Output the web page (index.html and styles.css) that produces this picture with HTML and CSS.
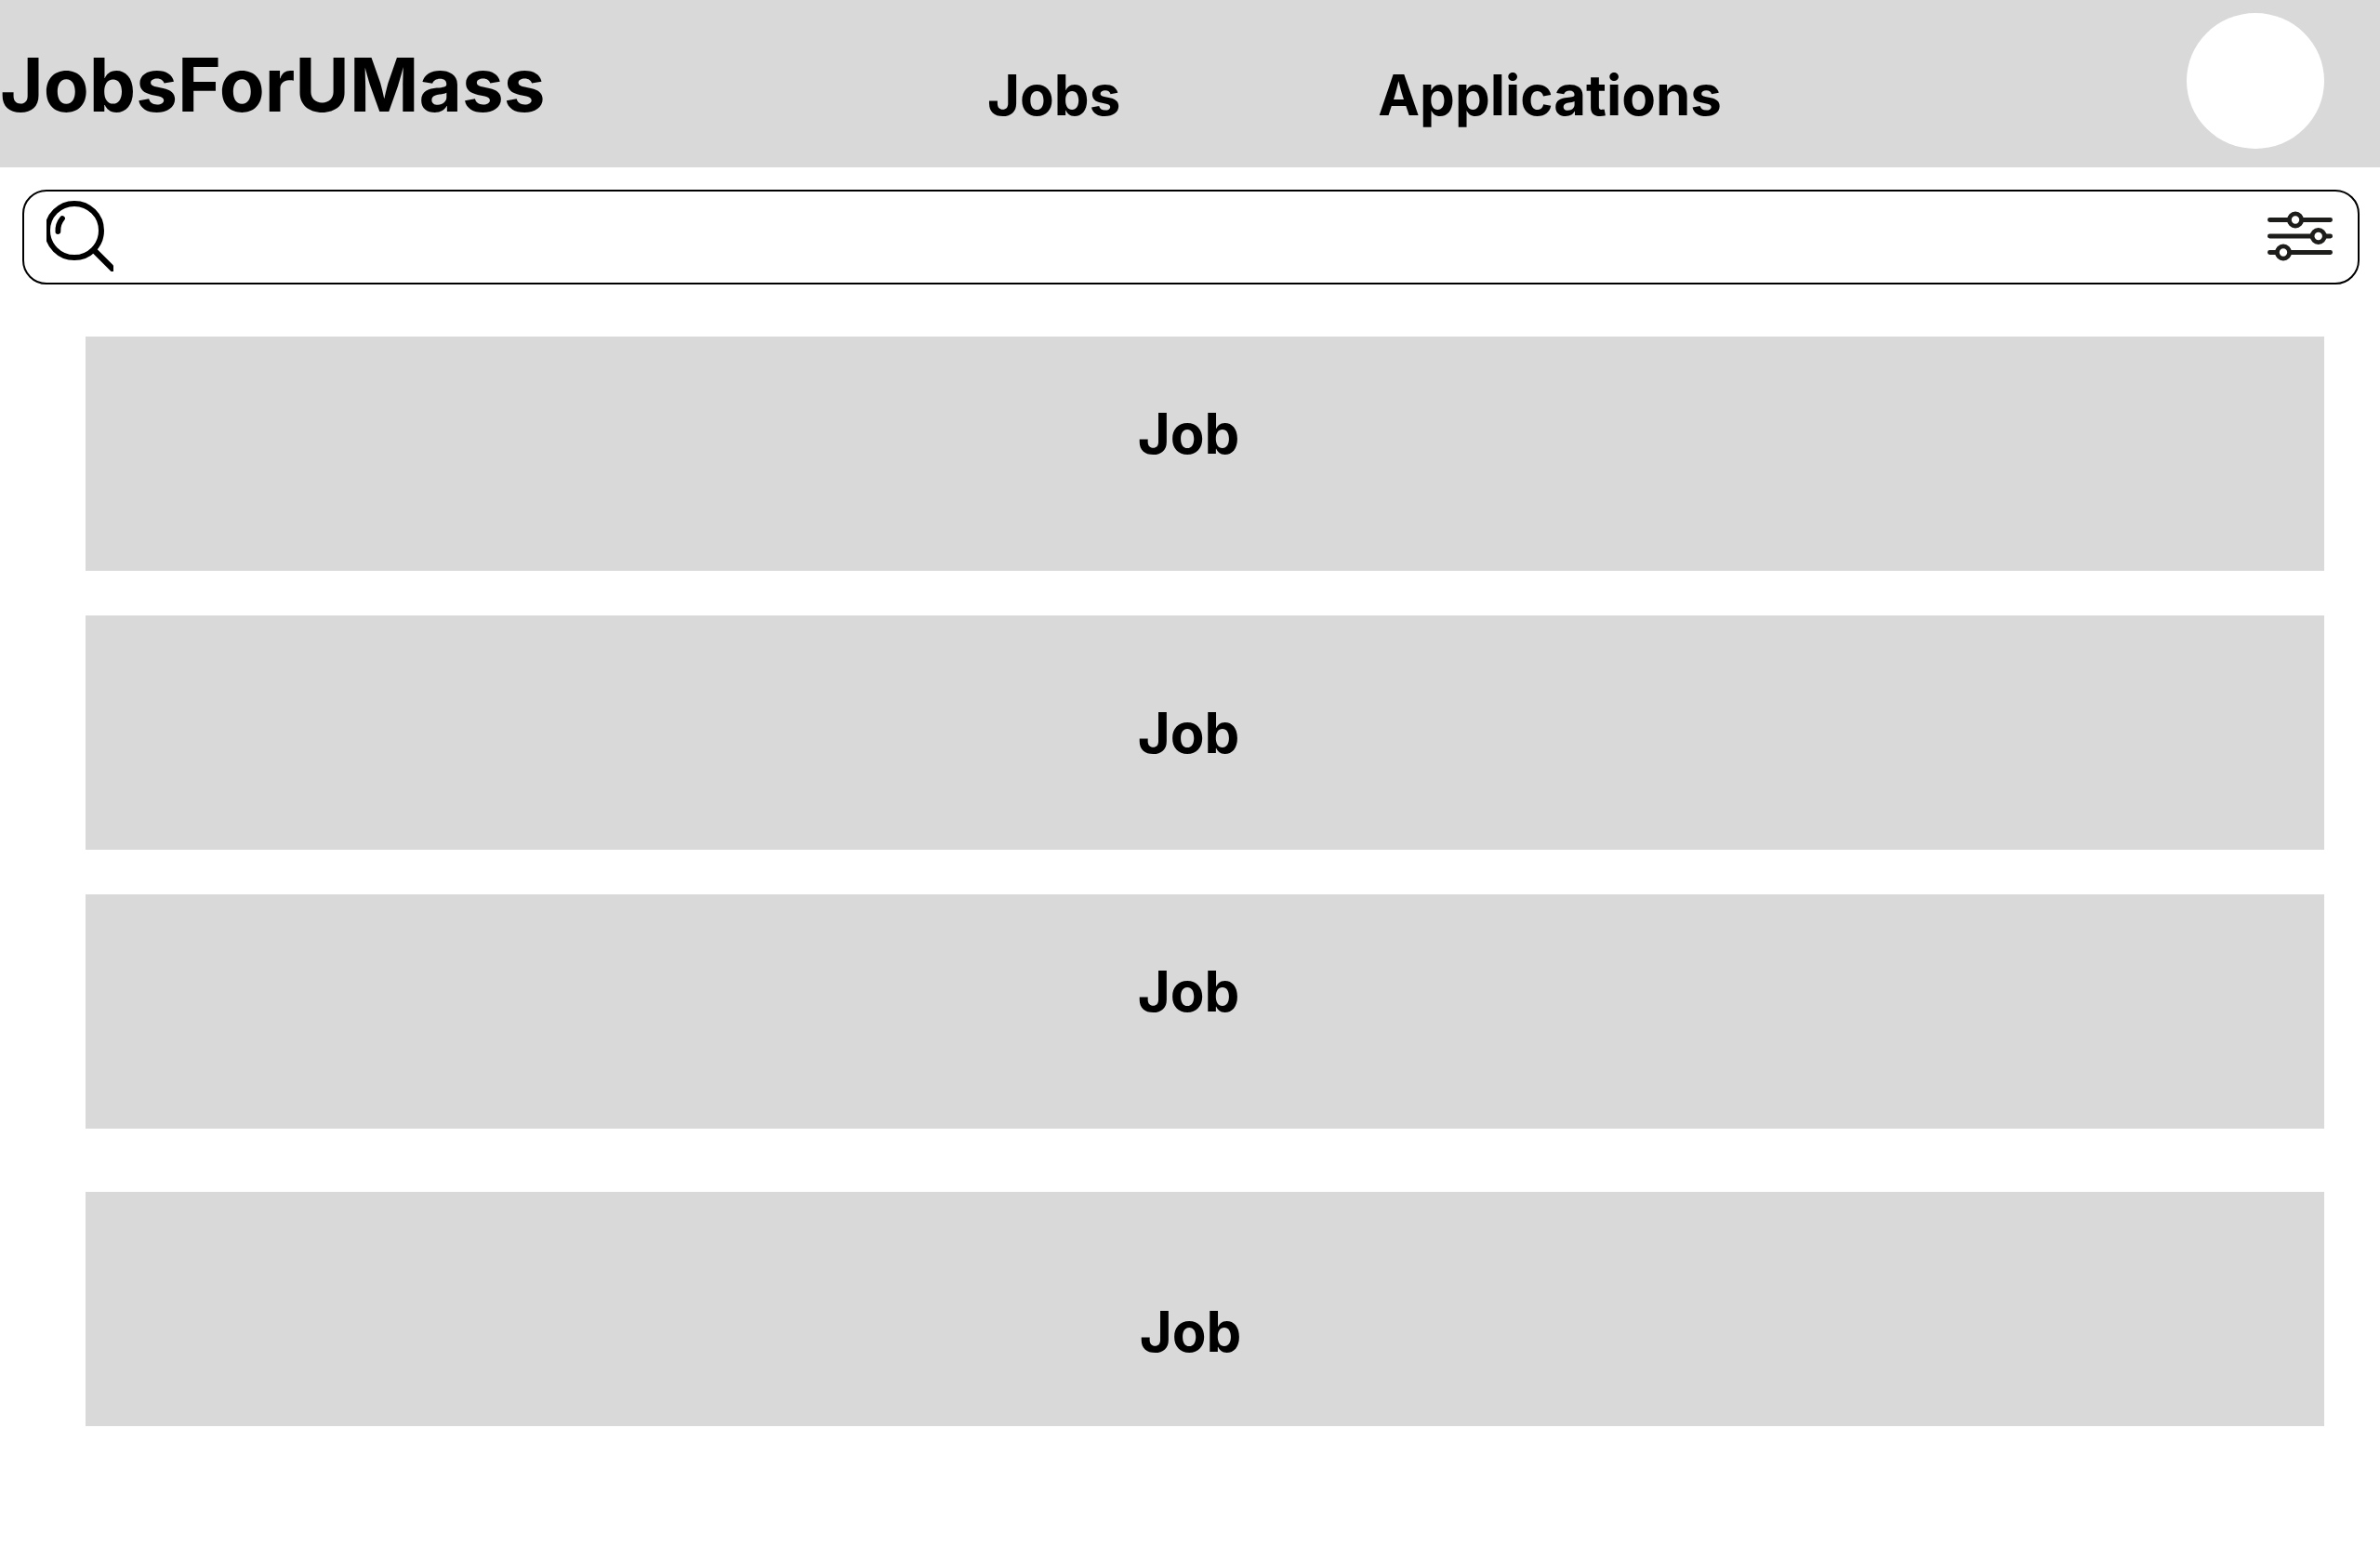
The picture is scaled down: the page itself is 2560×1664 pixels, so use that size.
FILE: index.html
```html
<!DOCTYPE html>
<html lang="en">
<head>
<meta charset="utf-8">
<meta name="viewport" content="width=device-width, initial-scale=1">
<title>JobsForUMass</title>
<link rel="stylesheet" href="styles.css">
</head>
<body>
<header class="header">
  <h1 class="brand">JobsForUMass</h1>
  <nav class="nav" aria-label="Main">
    <a class="nav-link" href="#jobs">Jobs</a>
    <a class="nav-link" href="#applications">Applications</a>
  </nav>
  <button class="avatar" type="button" aria-label="Profile"></button>
</header>
<form class="search" role="search">
  <label class="search-label" for="query" aria-label="Search jobs">
    <svg class="search-icon" viewBox="0 0 72 80" fill="none" stroke="#000" aria-hidden="true">
      <circle cx="30" cy="36" r="29" stroke-width="6"/>
      <path d="M51 57 76 82" stroke-width="6.400"/>
      <path d="M17 23Q12 29 12.400 37" stroke-width="5.800" stroke-linecap="round"/>
    </svg>
  </label>
  <input class="search-input" id="query" type="search">
  <button class="filter" type="button" aria-label="Filters">
    <svg class="filter-icon" viewBox="0 0 70 54" fill="none" stroke="#1d1d1b" stroke-width="4.800" stroke-linecap="round" aria-hidden="true">
      <path d="M2.400 9.500H67.600M2.400 27H67.600M2.400 44.500H67.600"/>
      <g fill="#fff">
        <circle cx="30" cy="9.500" r="6.600"/>
        <circle cx="54.700" cy="27" r="6.600"/>
        <circle cx="17" cy="44.500" r="6.600"/>
      </g>
    </svg>
  </button>
</form>
<main class="jobs" id="jobs">
  <article class="job job-high"><h2 class="job-title">Job</h2></article>
  <article class="job"><h2 class="job-title">Job</h2></article>
  <article class="job job-high"><h2 class="job-title">Job</h2></article>
  <article class="job job-low"><h2 class="job-title">Job</h2></article>
</main>
</body>
</html>
```
FILE: styles.css
```css
* {
  box-sizing: border-box;
}

body {
  margin: 0;
  background: #fff;
  color: #000;
  font-family: Inter, "Liberation Sans", sans-serif;
}

.header {
  display: flex;
  align-items: flex-start;
  padding: 14px 60px 20px 0;
  background: #d9d9d9;
}

.brand {
  flex: 1062 1 0;
  margin: 0;
  padding-top: 29px;
  font-size: 80px;
  line-height: 96px;
  font-weight: 700;
}

.nav {
  display: flex;
  flex: 1290 1 0;
  gap: 277px;
  padding-top: 52px;
}

.nav-link {
  color: inherit;
  font-size: 60px;
  line-height: 72px;
  font-weight: 700;
  text-decoration: none;
}

.avatar {
  width: 148px;
  height: 146px;
  padding: 0;
  border: 0;
  border-radius: 50%;
  background: #fff;
}

.search {
  display: flex;
  align-items: center;
  margin: 24px 22px 56px 24px;
  padding: 6px 27px 12px 24px;
  border: 2px solid #000;
  border-radius: 26px;
}

.search-label,
.search-icon,
.filter-icon {
  display: block;
}

.search-icon {
  width: 72px;
  height: 80px;
}

.search-input {
  flex: 1;
  min-width: 0;
  height: 72px;
  margin: 0 24px;
  padding: 0;
  border: 0;
  outline: 0;
  background: transparent;
  font: 500 40px/48px Inter, "Liberation Sans", sans-serif;
}

.filter {
  padding: 4px 0 0;
  border: 0;
  background: transparent;
}

.filter-icon {
  width: 70px;
  height: 54px;
}

.jobs {
  display: flex;
  flex-direction: column;
  gap: 48px;
  margin: 0 60px 130px 92px;
}

.job {
  padding: 90px 35px 90px 0;
  background: #d9d9d9;
  text-align: center;
}

.job-high {
  padding-top: 68px;
  padding-bottom: 112px;
}

.job-low {
  margin-top: 20px;
  padding: 114px 31px 66px 0;
}

.job-title {
  margin: 0;
  font-size: 60px;
  line-height: 72px;
  font-weight: 700;
}
```
